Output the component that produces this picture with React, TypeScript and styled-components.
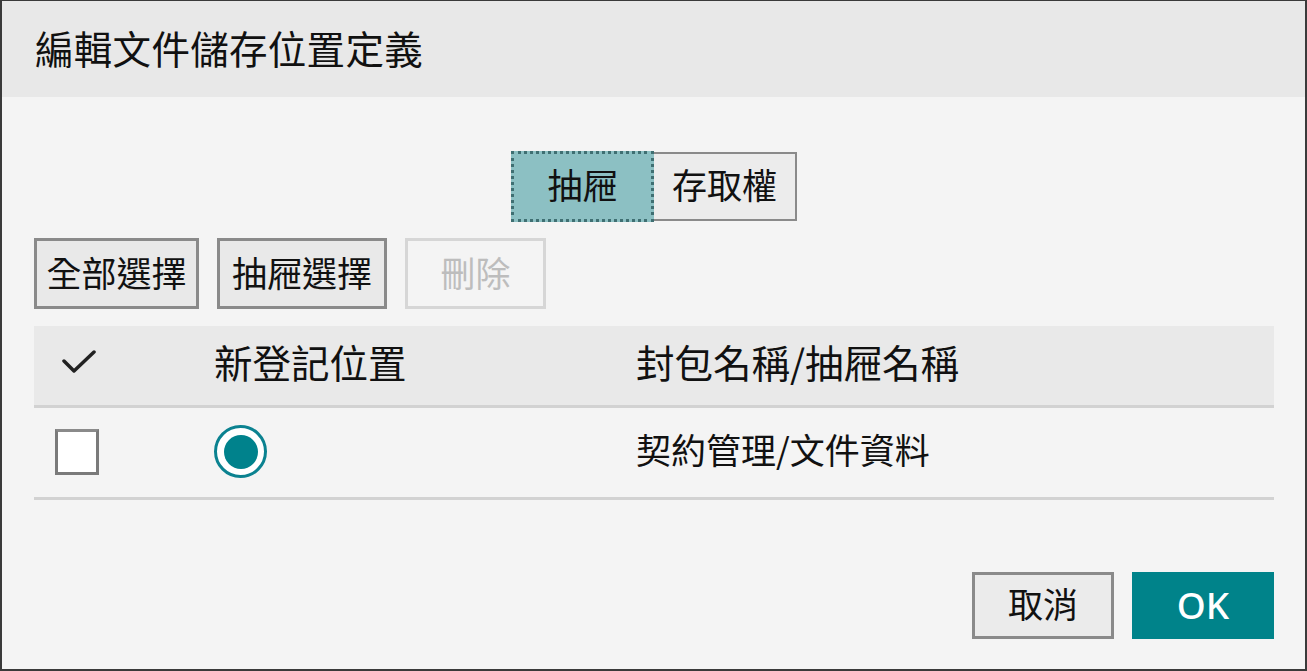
import React, { useState } from 'react';
import styled, { createGlobalStyle } from 'styled-components';

const GlobalStyle = createGlobalStyle`
  html, body {
    margin: 0;
    padding: 0;
    background: #f4f4f4;
  }
  * {
    box-sizing: border-box;
  }
`;

const FONT = `'Noto Sans CJK TC', 'Noto Sans', sans-serif`;

const Dialog = styled.div`
  width: 1307px;
  height: 671px;
  display: flex;
  flex-direction: column;
  background: #f4f4f4;
  border: 2px solid #3a3a3a;
  border-top-width: 1px;
  font-family: ${FONT};
  color: #111;
`;

const Header = styled.div`
  height: 96px;
  flex-shrink: 0;
  display: flex;
  align-items: center;
  padding: 0 0 5px 33px;
  background: #e8e8e8;
  font-size: 38.5px;
  letter-spacing: 0.3px;
`;

const Body = styled.div`
  flex: 1;
  display: flex;
  flex-direction: column;
  padding: 54px 31px 30px 32px;
`;

const TabGroup = styled.div`
  display: flex;
  justify-content: center;
`;

const Tab = styled.button<{ $active?: boolean }>`
  width: 143px;
  height: 71px;
  margin: 0;
  padding: 0 0 7px;
  font-family: ${FONT};
  font-size: 35px;
  color: #111;
  cursor: pointer;
  background: ${({ $active }) => ($active ? '#8cc0c3' : '#ececec')};
  border: ${({ $active }) => ($active ? '3px dotted #3f6f72' : '2px solid #8a8a8a')};
  ${({ $active }) => (!$active ? 'height: 69px; margin-top: 1px; border-left: none;' : '')}
`;

const Toolbar = styled.div`
  display: flex;
  gap: 18px;
  margin-top: 16px;
`;

const ToolButton = styled.button<{ $width: number }>`
  width: ${({ $width }) => $width}px;
  height: 71px;
  padding: 0 0 5px;
  font-family: ${FONT};
  font-size: 35px;
  color: #111;
  background: #e9e9e9;
  border: 3px solid #8a8a8a;
  cursor: pointer;

  &:disabled {
    color: #bdbdbd;
    background: #f4f4f4;
    border-color: #d6d6d6;
    cursor: default;
  }
`;

const Table = styled.div`
  margin-top: 17px;
  display: flex;
  flex-direction: column;
`;

const Row = styled.div<{ $head?: boolean }>`
  display: grid;
  grid-template-columns: 180px 422px 1fr;
  align-items: center;
  height: ${({ $head }) => ($head ? 82 : 92)}px;
  background: ${({ $head }) => ($head ? '#e9e9e9' : 'transparent')};
  border-bottom: 3px solid #d2d2d2;
  font-size: ${({ $head }) => ($head ? 38.5 : 35)}px;
`;

const Cell = styled.div<{ $pad?: number; $lift?: number }>`
  display: flex;
  align-items: center;
  padding-left: ${({ $pad }) => $pad ?? 0}px;
  padding-bottom: ${({ $lift }) => $lift ?? 0}px;
  white-space: nowrap;
`;

const CheckBox = styled.span`
  width: 44px;
  height: 46px;
  margin-bottom: 2px;
  background: #fff;
  border: 3px solid #7a7a7a;
  border-top-color: #8a8a8a;
`;

const Radio = styled.span`
  width: 53px;
  height: 53px;
  margin-bottom: 2px;
  border-radius: 50%;
  border: 3px solid #0b8290;
  background: #fff;
  display: flex;
  align-items: center;
  justify-content: center;

  &::after {
    content: '';
    width: 34px;
    height: 34px;
    border-radius: 50%;
    background: #00828c;
  }
`;

const Footer = styled.div`
  margin-top: auto;
  display: flex;
  justify-content: flex-end;
  gap: 18px;
`;

const FooterButton = styled.button<{ $primary?: boolean }>`
  width: 142px;
  height: 67px;
  padding: 0 0 ${({ $primary }) => ($primary ? 3 : 6)}px;
  font-family: ${({ $primary }) => ($primary ? `'Noto Sans', ${FONT}` : FONT)};
  font-size: ${({ $primary }) => ($primary ? 37 : 35)}px;
  font-weight: ${({ $primary }) => ($primary ? 500 : 400)};
  color: ${({ $primary }) => ($primary ? '#fff' : '#111')};
  background: ${({ $primary }) => ($primary ? '#00838a' : '#ebebeb')};
  border: ${({ $primary }) => ($primary ? 'none' : '3px solid #8a8a8a')};
  cursor: pointer;
`;

const CheckMark = () => (
  <svg width='34' height='26' viewBox='0 0 34 26'>
    <path d='M2 12 L12 22 L32 3' fill='none' stroke='#222' strokeWidth='3.5' strokeLinecap='round' strokeLinejoin='round' />
  </svg>
);

export default function App() {
  const [tab, setTab] = useState(0);

  return (
    <>
      <GlobalStyle />
      <Dialog>
        <Header>編輯文件儲存位置定義</Header>
        <Body>
          <TabGroup>
            <Tab $active={tab === 0} onClick={() => setTab(0)}>
              抽屜
            </Tab>
            <Tab $active={tab === 1} onClick={() => setTab(1)}>
              存取權
            </Tab>
          </TabGroup>

          <Toolbar>
            <ToolButton $width={165}>全部選擇</ToolButton>
            <ToolButton $width={170}>抽屜選擇</ToolButton>
            <ToolButton $width={141} disabled>
              刪除
            </ToolButton>
          </Toolbar>

          <Table>
            <Row $head>
              <Cell $pad={28} $lift={8}>
                <CheckMark />
              </Cell>
              <Cell $lift={9}>新登記位置</Cell>
              <Cell $lift={9}>封包名稱/抽屜名稱</Cell>
            </Row>
            <Row>
              <Cell $pad={21}>
                <CheckBox />
              </Cell>
              <Cell>
                <Radio />
              </Cell>
              <Cell $lift={9}>契約管理/文件資料</Cell>
            </Row>
          </Table>

          <Footer>
            <FooterButton>取消</FooterButton>
            <FooterButton $primary>OK</FooterButton>
          </Footer>
        </Body>
      </Dialog>
    </>
  );
}
